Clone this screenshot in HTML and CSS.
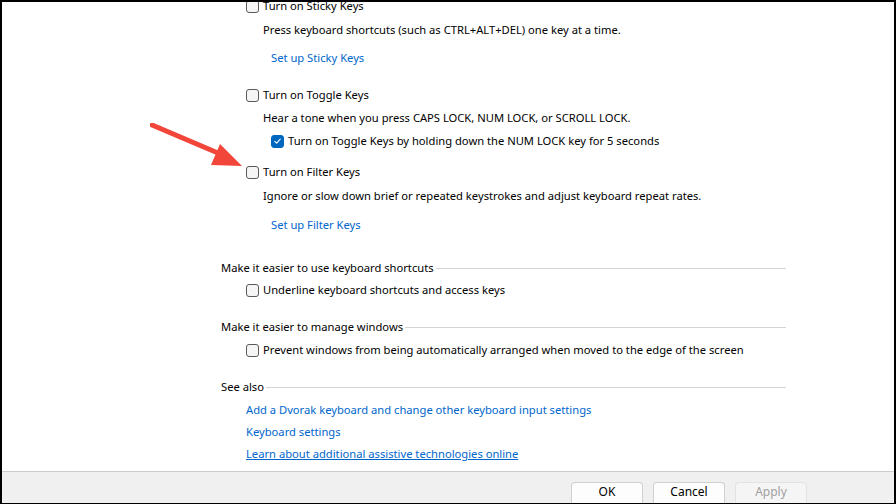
FILE: index.html
```html
<!DOCTYPE html>
<html>
<head>
<meta charset="utf-8">
<link rel="stylesheet" href="styles.css">
</head>
<body>
<div class="window">
  <div class="content">
    <div class="row opt first"><span class="cb"></span><span>Turn on Sticky Keys</span></div>
    <div class="row desc d4">Press keyboard shortcuts (such as CTRL+ALT+DEL) one key at a time.</div>
    <div class="row setup s8"><a class="link">Set up Sticky Keys</a></div>

    <div class="row opt g17"><span class="cb"></span><span>Turn on Toggle Keys</span></div>
    <div class="row desc d3">Hear a tone when you press CAPS LOCK, NUM LOCK, or SCROLL LOCK.</div>
    <div class="row subopt d3"><span class="cb checked"><svg viewBox="0 0 12 12" width="12" height="12"><path d="M3 6.3 L5.1 8.3 L9 4" fill="none" stroke="#fff" stroke-width="1.2" stroke-linecap="round" stroke-linejoin="round"/></svg></span><span>Turn on Toggle Keys by holding down the NUM LOCK key for 5 seconds</span></div>

    <div class="row opt g11"><span class="cb"></span><span>Turn on Filter Keys</span></div>
    <div class="row desc d4">Ignore or slow down brief or repeated keystrokes and adjust keyboard repeat rates.</div>
    <div class="row setup s9"><a class="link">Set up Filter Keys</a></div>

    <div class="row head g23"><span>Make it easier to use keyboard shortcuts</span><span class="rule"></span></div>
    <div class="row opt d2"><span class="cb"></span><span>Underline keyboard shortcuts and access keys</span></div>

    <div class="row head g17"><span>Make it easier to manage windows</span><span class="rule"></span></div>
    <div class="row opt d3"><span class="cb"></span><span>Prevent windows from being automatically arranged when moved to the edge of the screen</span></div>

    <div class="row head g17"><span>See also</span><span class="rule"></span></div>
    <div class="row seelink d3"><a class="link">Add a Dvorak keyboard and change other keyboard input settings</a></div>
    <div class="row seelink d2"><a class="link">Keyboard settings</a></div>
    <div class="row seelink d2"><a class="link ul">Learn about additional assistive technologies online</a></div>

    <svg class="arrow" width="100" height="50" viewBox="0 0 100 50">
      <line x1="2" y1="2" x2="75" y2="33" stroke="#f2463b" stroke-width="5" stroke-linecap="round"/>
      <polygon points="70,21 92,43 61,42" fill="#f2463b"/>
    </svg>
  </div>
  <div class="footer">
    <button class="btn">OK</button>
    <button class="btn">Cancel</button>
    <button class="btn disabled">Apply</button>
  </div>
</div>
</body>
</html>
```

FILE: styles.css
```css
* { box-sizing: border-box; }
html, body { margin: 0; padding: 0; }
body {
  width: 896px;
  height: 504px;
  overflow: hidden;
  font-family: "Noto Sans", "Open Sans", sans-serif;
  font-size: 11.2px;
  color: #000;
  background: #fff;
}
.window {
  width: 896px;
  height: 504px;
  border-style: solid;
  border-color: #000;
  border-width: 2px 2px 1px 2px;
  display: flex;
  flex-direction: column;
  overflow: hidden;
}
.content {
  position: relative;
  flex: 1;
  overflow: hidden;
  background: #fff;
  padding-left: 219px;
  padding-right: 108px;
}
.row {
  height: 20px;
  line-height: 20px;
  display: flex;
  align-items: center;
  white-space: nowrap;
}
.first { margin-top: -6px; }
.d2 { margin-top: 2px; }
.d3 { margin-top: 3px; }
.d4 { margin-top: 4px; }
.s8 { margin-top: 8px; }
.s9 { margin-top: 9px; }
.g11 { margin-top: 11px; }
.g17 { margin-top: 17px; }
.g23 { margin-top: 23px; }

.opt { padding-left: 25px; }
.desc { padding-left: 42px; }
.setup { padding-left: 50px; }
.subopt { padding-left: 50px; }
.seelink { padding-left: 25px; }
.head { padding-left: 0; }
.rule {
  flex: 1;
  height: 1px;
  background: #d5d5d5;
  margin-left: 2px;
}
.cb {
  width: 13px;
  height: 13px;
  border: 1px solid #5a5a5a;
  border-radius: 3px;
  background: #f5f5f5;
  margin-right: 4px;
  flex: none;
  display: inline-flex;
  align-items: center;
  justify-content: center;
}
.cb.checked {
  background: #0067c0;
  border-color: #0067c0;
}
.cb.checked svg { display: block; }
.link { color: #0066cc; cursor: pointer; }
.link.ul { text-decoration: underline; }
.arrow {
  position: absolute;
  left: 148px;
  top: 121px;
}
.footer {
  height: 32px;
  flex: none;
  background: #f0f0f0;
  border-top: 1px solid #cccccc;
  display: flex;
  justify-content: flex-end;
  align-items: flex-start;
  padding-top: 10px;
  padding-right: 87px;
  gap: 10px;
}
.btn {
  width: 72px;
  height: 24px;
  font-family: inherit;
  font-size: 12px;
  color: #000;
  background: #fdfdfd;
  border: 1px solid #d0d0d0;
  border-bottom-color: #bdbdbd;
  border-radius: 4px;
  padding: 0 0 4px 0;
  line-height: 18px;
}
.btn.disabled {
  color: #a0a0a0;
  background: #f5f5f5;
  border-color: #e2e2e2;
}
```
